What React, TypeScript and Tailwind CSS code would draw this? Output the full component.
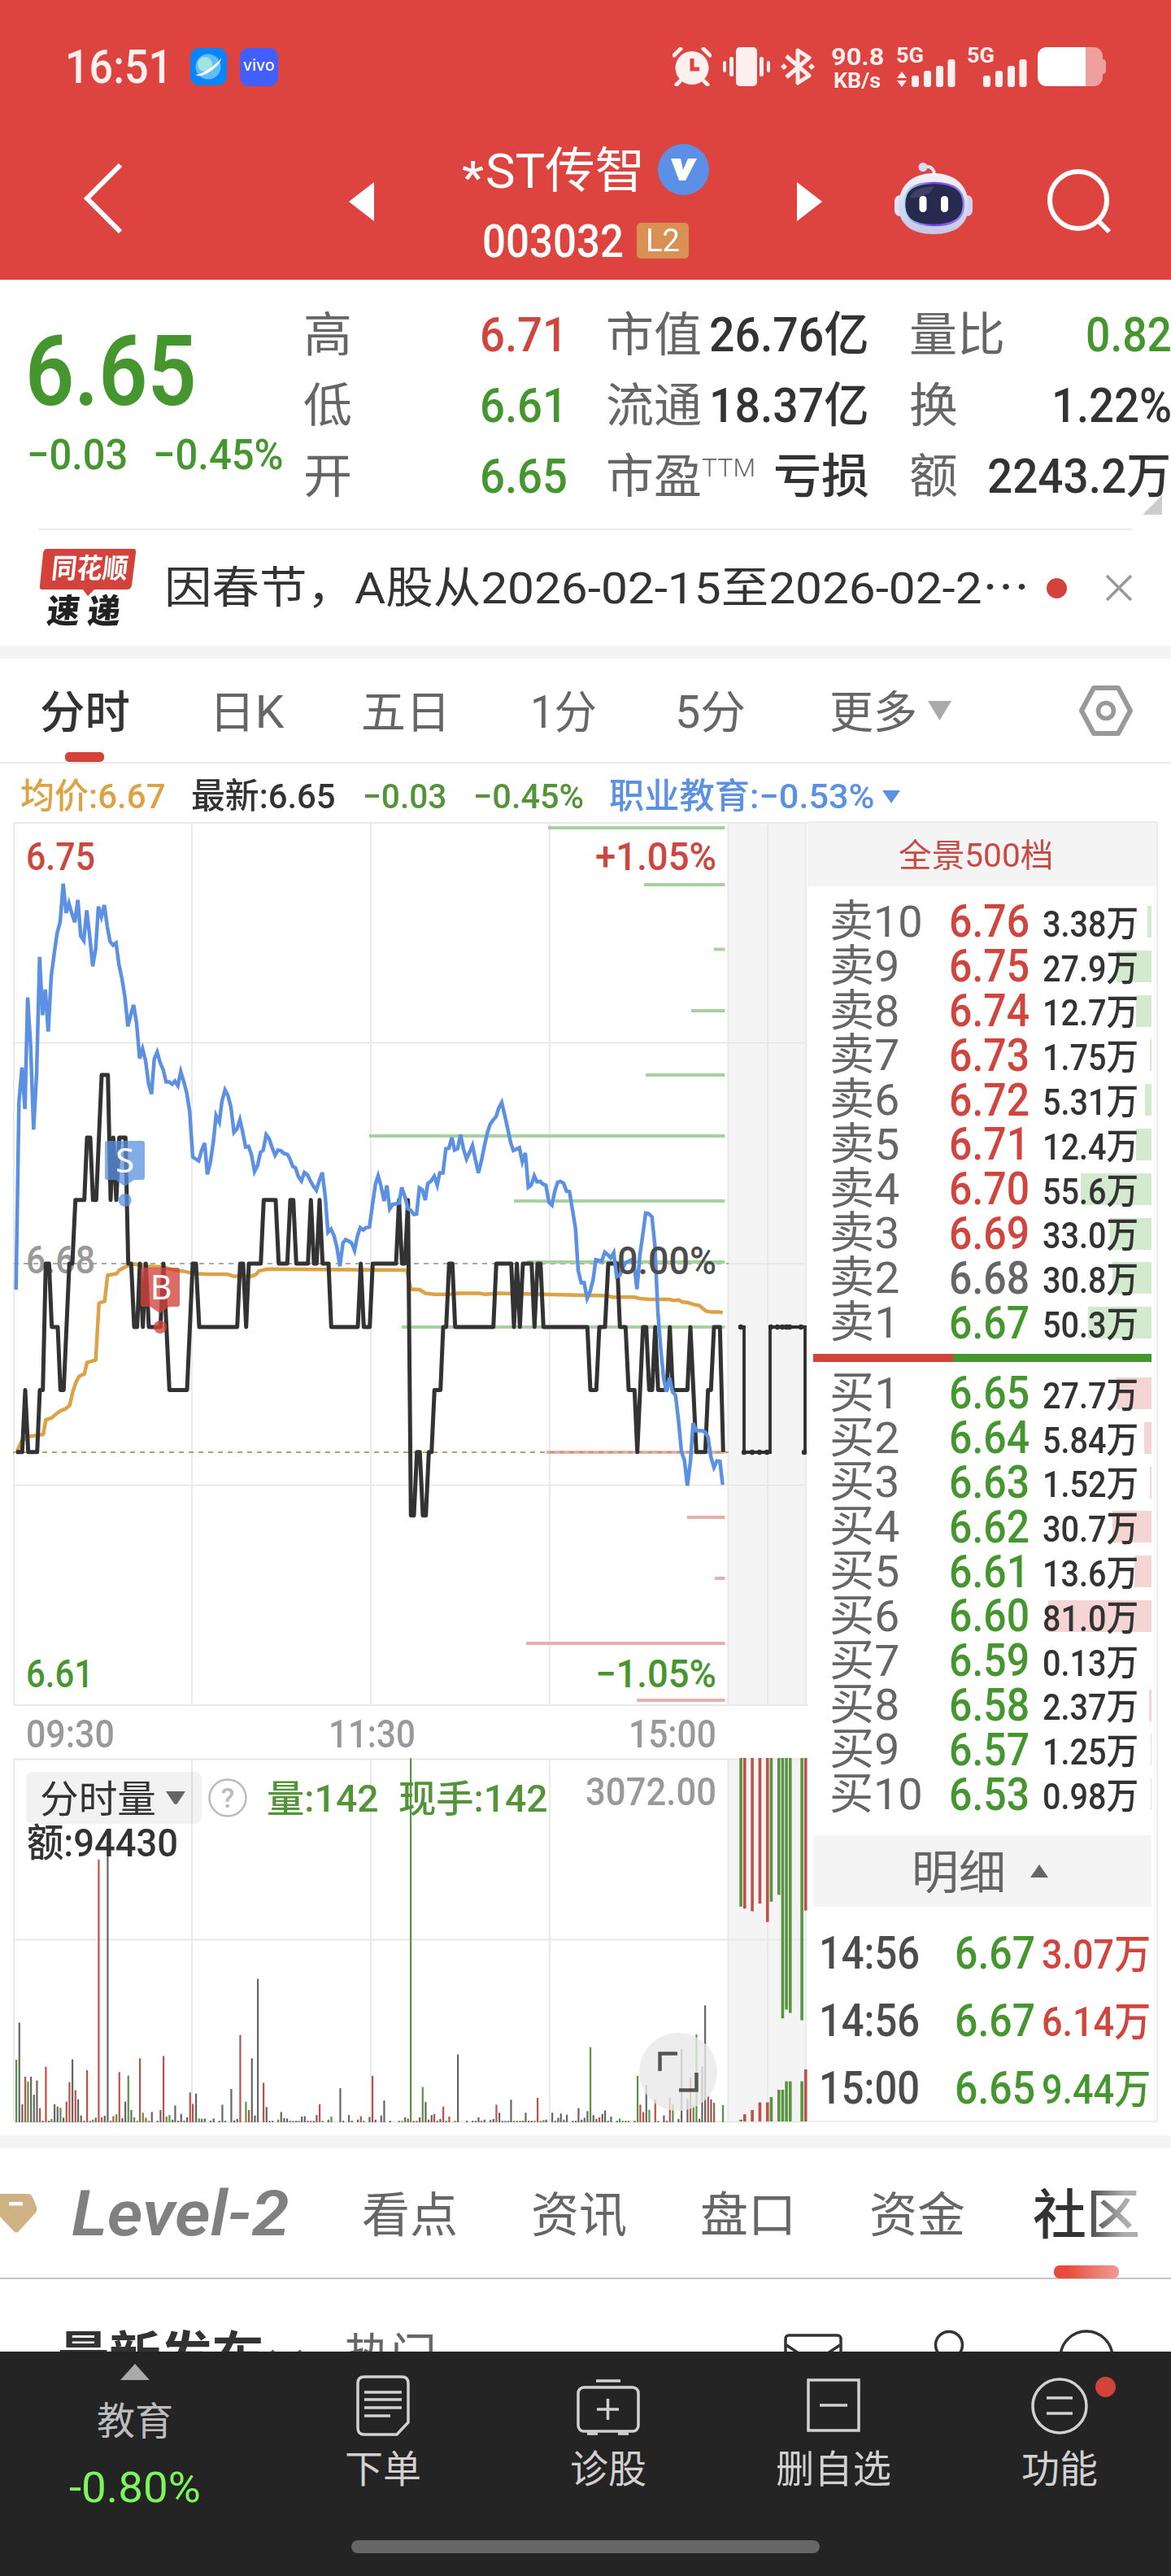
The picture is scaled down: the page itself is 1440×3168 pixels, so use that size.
import React, { useLayoutEffect, useRef } from "react";

/* Text squeezed or widened to exactly fill the width of its box. */
function Fit({ className = "", children }: { className?: string; children: React.ReactNode }) {
  const box = useRef<HTMLSpanElement>(null);
  const text = useRef<HTMLSpanElement>(null);
  useLayoutEffect(() => {
    const fit = () => {
      if (!box.current || !text.current) return;
      const natural = text.current.offsetWidth;
      if (natural) text.current.style.transform = `scaleX(${box.current.clientWidth / natural})`;
    };
    fit();
    document.fonts?.ready.then(fit);
  }, []);
  return (
    <span ref={box} className={`block shrink-0 whitespace-nowrap leading-none ${className}`}>
      <span ref={text} className="inline-block origin-left leading-none">
        {children}
      </span>
    </span>
  );
}

/* ---------- chart data: x in thirds of a pixel ---------- */
const priceLine =
  "60,1369 82,1369 93,1236 104,1369 137,1369 147,1236 158,1236 169,965 181,965 191,1101 213,1101 223,1236 235,1236 256,965 267,965 278,829 311,829 321,695 333,695 343,829 355,829 375,561 398,561 408,829 418,695 429,829 440,695 463,695 473,965 484,965 495,1101 506,1101 516,965 527,1101 538,965 549,1101 592,1101 603,965 625,1236 690,1236 711,965 723,965 735,1101 875,1101 886,965 897,965 908,1101 918,965 962,965 973,829 1017,829 1028,965 1060,965 1071,829 1082,829 1093,965 1136,965 1147,829 1158,965 1168,965 1179,829 1190,965 1212,965 1222,1101 1320,1101 1331,965 1342,1101 1364,1101 1375,965 1461,965 1472,829 1483,965 1494,965 1505,829 1516,1505 1527,1505 1538,1369 1549,1369 1560,1505 1571,1505 1582,1369 1592,1369 1603,1236 1625,1236 1635,1101 1646,1101 1657,965 1669,965 1679,1101 1820,1101 1831,965 1886,965 1896,1101 1907,965 1918,1101 1929,965 1961,965 1972,1101 1983,965 1994,965 2005,1101 2167,1101 2178,1236 2200,1236 2211,1101 2232,1101 2244,965 2277,965 2287,1101 2308,1101 2319,1236 2341,1236 2351,1369 2372,1101 2384,1101 2395,1236 2406,1236 2417,1101 2428,1236 2460,1236 2471,1101 2482,1236 2536,1236 2547,1101 2569,1369 2602,1369 2612,1236 2623,1236 2634,1101 2656,1101 2668,1369";
const sectorLine =
  "59,1021 70,620 81,545 92,634 102,395 113,500 124,678 135,560 146,308 157,433 167,378 178,468 189,350 200,300 211,257 222,233 233,151 244,214 254,193 265,215 276,234 287,186 298,263 309,273 320,208 331,263 342,328 353,290 363,200 374,222 385,197 396,244 406,275 417,283 428,278 439,325 450,355 461,395 472,457 483,431 493,411 504,450 515,526 526,505 537,530 548,580 559,602 569,527 580,512 591,535 602,550 613,576 624,576 635,581 645,574 656,584 667,554 678,575 689,600 700,640 711,737 733,745 744,722 755,707 765,774 776,748 787,705 797,648 809,662 819,617 830,593 841,605 852,630 863,684 874,677 885,657 895,682 906,715 917,714 928,732 939,768 950,755 961,727 971,722 982,689 993,698 1004,717 1015,733 1025,722 1036,723 1047,729 1060,731 1069,740 1080,757 1090,760 1101,779 1112,788 1123,770 1134,775 1145,788 1156,799 1167,808 1178,787 1189,770 1200,822 1210,898 1221,891 1232,905 1243,930 1254,971 1265,921 1275,914 1286,917 1297,921 1308,937 1319,905 1329,888 1340,893 1351,888 1363,887 1374,840 1385,795 1395,777 1406,800 1417,831 1427,798 1438,848 1449,838 1472,836 1482,802 1494,822 1505,848 1516,851 1527,860 1537,859 1547,803 1558,807 1569,829 1578,794 1591,788 1602,778 1613,797 1622,771 1634,771 1645,719 1656,718 1667,695 1677,722 1688,719 1699,689 1710,720 1721,741 1732,727 1743,712 1753,740 1765,771 1776,745 1787,713 1798,685 1808,667 1819,658 1830,650 1840,632 1851,620 1862,647 1873,676 1884,706 1894,723 1905,720 1916,717 1927,747 1938,728 1949,802 1960,797 1971,777 1981,790 1993,789 2003,795 2014,797 2025,834 2036,840 2047,810 2057,791 2068,789 2079,793 2090,810 2101,811 2112,850 2123,890 2133,980 2144,1006 2155,1006 2166,1040 2177,1025 2188,1000 2198,957 2220,960 2231,941 2242,946 2253,953 2264,942 2275,993 2287,990 2298,973 2308,964 2330,957 2340,970 2350,1020 2361,945 2372,900 2382,857 2393,858 2405,865 2416,925 2427,1070 2438,1150 2448,1210 2458,1240 2470,1210 2481,1240 2492,1247 2503,1300 2514,1368 2525,1387 2536,1441 2547,1390 2557,1307 2568,1323 2590,1323 2601,1326 2612,1337 2623,1380 2634,1402 2645,1388 2656,1389 2666,1439";
const averageLine =
  "62,1369 80,1345 105,1336 160,1331 169,1300 190,1296 210,1286 225,1280 240,1277 257,1269 268,1241 280,1220 290,1208 300,1204 311,1202 321,1177 353,1172 365,1050 386,1046 397,990 430,987 440,979 470,970 495,966 540,971 600,972 640,979 680,982 710,986 760,988 840,988 860,992 930,992 945,988 955,981 985,977 1500,979 1516,1020 1548,1021 1570,1029 1600,1031 1660,1031 1690,1029 1770,1029 1790,1031 1840,1029 2160,1033 2240,1034 2260,1037 2340,1037 2360,1040 2400,1042 2470,1042 2485,1044 2505,1043 2515,1047 2540,1049 2560,1053 2580,1055 2605,1067 2625,1069 2655,1069 2666,1071";

const PRICE_UNIT = 1568 / 900;
const VOLUME_UNIT = 1568 / 740;

const px = (points: string) =>
  points
    .split(" ")
    .map((p) => {
      const [x, y] = p.split(",").map(Number);
      return `${(x / 3).toFixed(1)},${(1000 + y / PRICE_UNIT).toFixed(1)}`;
    })
    .join(" ");

const askDepth = [
  [674, 1018],
  [792, 1088],
  [878, 1167.5],
  [850, 1243],
  [794, 1322],
  [454, 1397],
  [632, 1477],
  [648, 1552],
  [494, 1632],
];
const bidDepth = [
  [672, 1786],
  [845, 1866],
  [879, 1941],
  [647, 2021],
  [783, 2091],
];

const volume =
  "60,1384,g 71,1287,k 82,1500,k 93,1428,r 103,1441,g 114,1428,k 125,1475,k 136,1438,k 147,1510,r 158,1543,k 169,1402,r 180,1543,k 190,1538,g 201,1500,k 212,1506,k 223,1509,g 234,1535,k 245,1493,r 256,1442,r 267,1383,k 278,1463,r 288,1487,k 299,1529,k 310,1543,k 321,1411,r 332,1543,r 342,1540,g 353,1535,k 364,862,r 375,1534,r 386,1530,k 397,810,k 408,1543,g 418,1531,r 429,1526,g 440,1416,r 451,1536,k 462,1493,k 473,1425,g 484,1515,k 495,1534,g 506,1543,g 516,1380,r 527,1522,g 538,1535,r 549,1543,g 560,1520,k 581,1543,k 592,1515,k 603,1374,r 614,1532,g 625,1528,g 636,1540,k 646,1503,k 657,1543,k 668,1525,k 679,1543,k 690,1534,k 701,1469,r 711,1499,r 723,1472,k 734,1537,g 744,1538,k 755,1537,k 777,1543,k 788,1537,k 809,1543,k 820,1501,k 831,1543,k 853,1460,k 864,1542,k 875,1538,k 886,1319,r 907,1493,g 918,1515,r 929,1380,k 940,1529,k 951,1173,k 972,1444,r 983,1507,k 994,1543,k 1005,1543,k 1026,1540,g 1037,1520,k 1048,1536,k 1059,1537,k 1070,1543,r 1081,1543,r 1092,1543,k 1102,1543,g 1113,1532,k 1124,1531,k 1135,1543,k 1146,1543,r 1157,1543,k 1168,1528,k 1179,1500,r 1190,1543,g 1211,1540,k 1222,1532,g 1255,1458,k 1266,1543,k 1287,1528,k 1298,1543,k 1320,1540,k 1331,1531,r 1342,1543,g 1363,1533,k 1374,1426,r 1385,1540,k 1406,1529,k 1417,1490,k 1439,1543,k 1472,1543,r 1483,1543,g 1494,1534,k 1505,1537,r 1515,598,g 1526,1543,r 1537,1543,r 1548,1534,k 1559,1455,g 1570,1494,k 1581,1540,r 1592,1528,k 1602,1525,r 1613,1543,k 1624,1538,k 1635,1506,r 1646,1543,k 1657,1532,r 1678,1543,g 1689,1370,k 1722,1543,k 1743,1543,k 1754,1543,k 1765,1534,k 1776,1543,k 1787,1540,k 1809,1541,k 1820,1538,k 1831,1501,r 1842,1522,k 1853,1543,k 1864,1543,k 1875,1543,k 1885,1488,k 1896,1543,g 1907,1543,g 1918,1543,r 1929,1543,k 1939,1522,k 1950,1543,k 1961,1543,k 1972,1543,r 1983,1483,r 1994,1543,g 2005,1541,g 2015,1540,k 2037,1522,k 2048,1543,k 2059,1535,k 2069,1524,k 2080,1540,k 2091,1527,k 2113,1543,k 2124,1543,k 2134,1510,k 2145,1540,k 2156,1535,k 2167,1518,k 2178,1351,g 2189,1528,k 2200,1538,k 2211,1534,r 2222,1525,k 2232,1516,k 2243,1543,k 2254,1532,k 2276,1543,k 2286,1537,g 2297,1543,g 2308,1543,k 2319,1543,g 2341,1543,k 2352,1426,g 2362,1501,r 2373,1520,r 2384,1449,k 2395,1514,g 2417,1487,r 2428,1543,g 2449,1529,k 2460,1543,k 2471,1483,r 2482,1500,g 2503,1538,k 2514,1356,k 2536,1487,k 2547,1430,r 2558,1503,g 2569,1318,g 2580,1538,k 2590,1401,k 2601,1242,k 2612,1478,r 2623,1487,k 2634,1496,r 2667,1502,g";

/* x, lower end of the hanging bar, upper end of the standing bar, colour */
const closing: [number, number, number, "g" | "r"][] = [
  [2733, 985, 1540, "g"],
  [2747, 990, 1526, "r"],
  [2775, 997, 1515, "r"],
  [2803, 977, 1495, "r"],
  [2831, 1025, 1495, "r"],
  [2845, 972, 1481, "g"],
  [2873, 954, 1462, "g"],
  [2887, 1276, 1462, "g"],
  [2901, 1253, 1440, "g"],
  [2915, 1262, 1440, "g"],
  [2958, 1281, 1440, "g"],
  [2972, 995, 1409, "r"],
];
const barColor: Record<string, string> = { g: "#5a9443", r: "#be5149", k: "#666666" };
const vy = (y: number) => 1880 + y / VOLUME_UNIT;

type Level = { label: string; price: string; qty: string; bar: number };
const asks: Level[] = [
  { label: "卖10", price: "6.76", qty: "3.38万", bar: 5 },
  { label: "卖9", price: "6.75", qty: "27.9万", bar: 43 },
  { label: "卖8", price: "6.74", qty: "12.7万", bar: 19 },
  { label: "卖7", price: "6.73", qty: "1.75万", bar: 2 },
  { label: "卖6", price: "6.72", qty: "5.31万", bar: 8 },
  { label: "卖5", price: "6.71", qty: "12.4万", bar: 19 },
  { label: "卖4", price: "6.70", qty: "55.6万", bar: 87 },
  { label: "卖3", price: "6.69", qty: "33.0万", bar: 51 },
  { label: "卖2", price: "6.68", qty: "30.8万", bar: 48 },
  { label: "卖1", price: "6.67", qty: "50.3万", bar: 78 },
];
const bids: Level[] = [
  { label: "买1", price: "6.65", qty: "27.7万", bar: 43 },
  { label: "买2", price: "6.64", qty: "5.84万", bar: 9 },
  { label: "买3", price: "6.63", qty: "1.52万", bar: 2 },
  { label: "买4", price: "6.62", qty: "30.7万", bar: 48 },
  { label: "买5", price: "6.61", qty: "13.6万", bar: 21 },
  { label: "买6", price: "6.60", qty: "81.0万", bar: 127 },
  { label: "买7", price: "6.59", qty: "0.13万", bar: 0 },
  { label: "买8", price: "6.58", qty: "2.37万", bar: 3 },
  { label: "买9", price: "6.57", qty: "1.25万", bar: 1 },
  { label: "买10", price: "6.53", qty: "0.98万", bar: 1 },
];
const trades = [
  { time: "14:56", price: "6.67", qty: "3.07万", up: true },
  { time: "14:56", price: "6.67", qty: "6.14万", up: true },
  { time: "15:00", price: "6.65", qty: "9.44万", up: false },
];

function priceColor(p: string) {
  const n = Number(p);
  return n > 6.68 ? "text-[#d0463e]" : n < 6.68 ? "text-[#45962f]" : "text-[#666]";
}

/* ---------- header ---------- */
function StatusBar() {
  return (
    <div className="flex h-[164px] items-center text-[#fff0ef]">
      <Fit className="ml-[80px] w-[132px] text-[58px] font-medium">16:51</Fit>
      <svg className="ml-[22px] shrink-0" width="45" height="48" viewBox="0 0 45 48">
        <rect y="1" width="45" height="46" rx="11" fill="#0a84fb" />
        <circle cx="22" cy="24" r="15.500" fill="#62bdf5" />
        <circle cx="18" cy="21" r="9" fill="#b4ecd8" opacity=".8" />
        <path d="M6 33C10 38 40 16 38 12C40 22 12 42 6 33Z" fill="#fff" />
      </svg>
      <span className="ml-[16px] flex h-[47px] w-[47px] shrink-0 items-center justify-center rounded-[11px] bg-[#415fff] text-white">
        <Fit className="w-[39px] pb-1 font-['Inter'] text-[19px] font-medium">vivo</Fit>
      </span>
      <svg className="ml-[485px] shrink-0" width="48" height="48" viewBox="0 0 48 48">
        <circle cx="24" cy="25.500" r="20.500" fill="currentColor" />
        <path d="M9 42L5 46M39 42L43 46M2 10L10 2M46 10L38 2" stroke="currentColor" strokeWidth="5" strokeLinecap="round" />
        <path d="M24 14V27H33" stroke="#dd4440" strokeWidth="5" fill="none" />
      </svg>
      <svg className="ml-[14px] shrink-0" width="58" height="48" viewBox="0 0 58 48" fill="currentColor">
        <rect x="16" width="26" height="48" rx="5" />
        <rect x="8" y="12" width="5" height="24" rx="2" />
        <rect x="45" y="12" width="5" height="24" rx="2" />
        <rect y="17" width="4" height="14" rx="2" />
        <rect x="54" y="17" width="4" height="14" rx="2" />
      </svg>
      <svg className="ml-[13px] shrink-0" width="42" height="48" viewBox="0 0 42 48">
        <path d="M7 11L35 35L21 44V4L35 13L7 37" fill="none" stroke="currentColor" strokeWidth="5" strokeLinejoin="round" />
        <path d="M4 20l4 4-4 4-4-4zM38 20l4 4-4 4-4-4z" fill="currentColor" />
      </svg>
      <div className="ml-[19px] flex w-[66px] shrink-0 flex-col items-center gap-[1px] pt-[3px]">
        <Fit className="w-[65px] text-[29px] font-bold">90.8</Fit>
        <Fit className="w-[58px] text-[26px] font-bold">KB/s</Fit>
      </div>
      <svg className="ml-[14px] shrink-0 overflow-visible" width="164" height="50" viewBox="0 0 164 50" fill="currentColor">
        <text x="1" y="20" fontSize="25" fontWeight="700" fontFamily="Roboto" textLength="34" lengthAdjust="spacingAndGlyphs">5G</text>
        <text x="88" y="20" fontSize="25" fontWeight="700" fontFamily="Roboto" textLength="34" lengthAdjust="spacingAndGlyphs">5G</text>
        <path d="M8 31l6 8H2zM8 50l6-8H2z" />
        {[0, 88].map((dx) => (
          <g key={dx}>
            <rect x={20 + dx} y="36" width="9" height="14" rx="3" />
            <rect x={35 + dx} y="30" width="9" height="20" rx="3" />
            <rect x={50 + dx} y="24" width="9" height="26" rx="3" />
            <rect x={64.5 + dx} y="16" width="9" height="34" rx="3" />
          </g>
        ))}
      </svg>
      <svg className="ml-[11px] shrink-0" width="84" height="48" viewBox="0 0 84 48">
        <path d="M59 0h10a11 11 0 0 1 11 11v4a4 4 0 0 1 4 4v10a4 4 0 0 1-4 4v4a11 11 0 0 1-11 11H59z" fill="#eea09e" />
        <path d="M59 0H11A11 11 0 0 0 0 11v26a11 11 0 0 0 11 11h48z" fill="#fff" />
      </svg>
    </div>
  );
}

function TitleBar() {
  return (
    <div className="flex h-[180px] items-start text-white">
      <svg className="ml-[101px] mt-[37px] shrink-0" width="50" height="86" viewBox="0 0 50 86">
        <path d="M47 2L6 43L47 84" fill="none" stroke="#fff" strokeWidth="6" />
      </svg>
      <svg className="ml-[278px] mt-[60px] shrink-0" width="31" height="48">
        <path d="M31 0V48L0 24Z" fill="#fff" />
      </svg>
      <div className="ml-[105px] flex w-[314px] shrink-0 flex-col">
        <div className="mt-[10px] flex h-[68px] items-center">
          <Fit className="ml-[3px] w-[27px] pt-[21px] text-[56px] font-medium">*</Fit>
          <Fit className="ml-[2px] w-[196px] pt-[5px] text-[60px]">ST传智</Fit>
          <span className="ml-[16px] flex size-[63px] items-center justify-center rounded-full bg-[#5b90e6]">
            <svg width="32" height="27" viewBox="0 0 32 27">
              <path d="M0 0H12L15 14L21 0H32L18 27H10Z" fill="#fff" />
            </svg>
          </span>
        </div>
        <div className="mt-[20px] flex h-[68px] items-center">
          <Fit className="ml-[28px] w-[174px] pt-[2px] text-[56px] font-medium">003032</Fit>
          <span className="ml-[16px] flex h-[44px] w-[64px] items-center justify-center rounded-[5px] bg-[#d89153]">
            <Fit className="w-[42px] text-[39px]">L2</Fit>
          </span>
        </div>
      </div>
      <svg className="ml-[101px] mt-[60px] shrink-0" width="31" height="48">
        <path d="M0 0V48L31 24Z" fill="#fff" />
      </svg>
      <svg className="ml-[88px] mt-[35px] shrink-0" width="98" height="90" viewBox="0 0 98 90">
        <defs>
          <linearGradient id="shell" x1="0" y1="0" x2="0" y2="1">
            <stop offset="0" stopColor="#f4f2fb" />
            <stop offset="1" stopColor="#c3c6e6" />
          </linearGradient>
          <linearGradient id="rim" x1="0" y1="0" x2="1" y2="0">
            <stop offset="0" stopColor="#a9e6ee" />
            <stop offset="0.5" stopColor="#7a3fe0" />
            <stop offset="1" stopColor="#8f86ea" />
          </linearGradient>
        </defs>
        <path d="M36 7C46 4 50 9 50 17" fill="none" stroke="#e8e2f4" strokeWidth="4" />
        <circle cx="36" cy="6.500" r="5.500" fill="#d9dbf2" />
        <rect x="1" y="41" width="16" height="26" rx="7" fill="#e4e2f4" />
        <rect x="81" y="41" width="16" height="26" rx="7" fill="#d3d0ee" />
        <path d="M49 14C76 14 92 30 92 54C92 77 76 89 49 89C22 89 6 77 6 54C6 30 22 14 49 14Z" fill="url(#shell)" />
        <path d="M49 26C74 26 86 34 86 52C86 69 76 78 49 78C22 78 13 69 13 52C13 34 24 26 49 26Z" fill="#27294f" stroke="url(#rim)" strokeWidth="2.500" />
        <path d="M20 44C23 34 34 31 50 30C46 40 30 46 20 44Z" fill="#46486a" opacity=".8" />
        <rect x="31.500" y="42" width="9" height="20" rx="4.500" fill="#fff" />
        <rect x="58" y="42" width="9" height="20" rx="4.500" fill="#fff" />
      </svg>
      <svg className="ml-[90px] mt-[43px] shrink-0" width="82" height="84" viewBox="0 0 82 84">
        <circle cx="39" cy="39" r="35" fill="none" stroke="#fff" strokeWidth="6" />
        <path d="M63 64L77 78" stroke="#fff" strokeWidth="6" />
      </svg>
    </div>
  );
}

/* ---------- quote ---------- */
function Quote() {
  return (
    <div className="h-[306px] border-b-2 border-transparent">
      <div className="flex h-[304px] overflow-hidden">
        <div className="w-[372px] shrink-0">
          <Fit className="ml-[31px] mt-[53px] w-[211px] text-[120px] font-semibold text-[#45962f]">6.65</Fit>
          <div className="mt-[17px] flex text-[#45962f]">
            <Fit className="ml-[33px] w-[124px] text-[52px] font-medium">−0.03</Fit>
            <Fit className="ml-[31px] w-[161px] text-[52px] font-medium">−0.45%</Fit>
          </div>
        </div>
        <div className="w-[334px] shrink-0 pt-[24px] text-[58px] text-[#666]">
          {[
            ["高", "6.71", "text-[#cf463e]"],
            ["低", "6.61", "text-[#45962f]"],
            ["开", "6.65", "text-[#45962f]"],
          ].map(([k, v, c]) => (
            <div key={k} className="flex h-[87px] items-center">
              <Fit className="ml-[1px] w-[60px]">{k}</Fit>
              <Fit className={`ml-[157px] w-[108px] text-[60px] font-medium ${c}`}>{v}</Fit>
            </div>
          ))}
        </div>
        <div className="ml-[39px] w-[325px] shrink-0 pt-[24px] text-[58px] text-[#666]">
          <div className="flex h-[87px] items-center">
            <Fit className="w-[118px]">市值</Fit>
            <Fit className="ml-[9px] w-[197px] text-[59px] font-medium text-[#333]">26.76亿</Fit>
          </div>
          <div className="flex h-[87px] items-center">
            <Fit className="w-[118px]">流通</Fit>
            <Fit className="ml-[9px] w-[197px] text-[59px] font-medium text-[#333]">18.37亿</Fit>
          </div>
          <div className="flex h-[87px] items-center">
            <Fit className="w-[118px]">市盈</Fit>
            <Fit className="mb-[20px] w-[66px] text-[31px] font-light">TTM</Fit>
            <Fit className="ml-[22px] w-[118px] font-medium text-[#333]">亏损</Fit>
          </div>
        </div>
        <div className="relative ml-[48px] w-[322px] shrink-0 pt-[24px] text-[58px] text-[#666]">
          <div className="flex h-[87px] items-center">
            <Fit className="w-[118px]">量比</Fit>
            <Fit className="ml-[99px] w-[106px] text-[60px] font-medium text-[#45962f]">0.82</Fit>
          </div>
          <div className="flex h-[87px] items-center">
            <Fit className="w-[60px]">换</Fit>
            <Fit className="ml-[115px] w-[148px] text-[60px] font-medium text-[#333]">1.22%</Fit>
          </div>
          <div className="flex h-[87px] items-center">
            <Fit className="w-[60px]">额</Fit>
            <Fit className="ml-[36px] w-[226px] text-[59px] font-medium text-[#333]">2243.2万</Fit>
          </div>
          <svg className="absolute left-[287px] top-[265px]" width="24" height="24">
            <path d="M24 0V24H0Z" fill="#ccc" />
          </svg>
        </div>
      </div>
    </div>
  );
}

function News() {
  return (
    <div className="mx-[48px] flex h-[144px] items-center border-t-2 border-[#ececec]">
      <div className="relative h-[100px] w-[120px] shrink-0">
        <svg className="absolute inset-0" width="120" height="60">
          <path d="M10 2H116Q120 2 119 7L114 47Q113 52 108 52H68L60 60L54 52H4Q0 52 1 47L5 7Q6 2 10 2Z" fill="#d3433b" />
        </svg>
        <div className="relative flex -skew-x-6 flex-col items-center">
          <Fit className="mt-[9px] w-[94px] text-[34px] font-bold text-white">同花顺</Fit>
          <Fit className="ml-[-4px] mt-[16px] w-[90px] text-[41px] font-black text-[#222]">速 递</Fit>
        </div>
      </div>
      <Fit className="ml-[34px] w-[1064px] pt-[2px] text-[54px] text-[#333]">因春节，A股从2026-02-15至2026-02-2⋯</Fit>
      <span className="ml-[21px] size-[25px] shrink-0 rounded-full bg-[#d3433b]" />
      <svg className="ml-[48px] shrink-0" width="32" height="32" viewBox="0 0 32 32">
        <path d="M1 1L31 31M31 1L1 31" stroke="#999" strokeWidth="3.500" />
      </svg>
    </div>
  );
}

function PeriodTabs() {
  return (
    <div className="relative flex h-[129px] items-center border-b-2 border-[#e8e8e8] text-[55px] text-[#666]">
      <Fit className="ml-[49px] w-[111px] pt-[5px] font-medium text-[#333]">分时</Fit>
      <Fit className="ml-[97px] w-[93px] pt-[5px]">日K</Fit>
      <Fit className="ml-[94px] w-[110px] pt-[5px]">五日</Fit>
      <Fit className="ml-[98px] w-[82px] pt-[5px]">1分</Fit>
      <Fit className="ml-[96px] w-[87px] pt-[5px]">5分</Fit>
      <Fit className="ml-[103px] w-[108px] pt-[5px]">更多</Fit>
      <svg className="ml-[13px] shrink-0" width="29" height="24">
        <path d="M0 0H29L14.500 24Z" fill="#aaa" />
      </svg>
      <svg className="ml-[157px] shrink-0" width="66" height="62" viewBox="0 0 66 62">
        <path d="M18 3H48L63 31L48 59H18L3 31Z" fill="none" stroke="#999" strokeWidth="6" strokeLinejoin="round" />
        <circle cx="33" cy="31" r="9.500" fill="none" stroke="#999" strokeWidth="5.500" />
      </svg>
      <span className="absolute bottom-0 left-[80px] h-[12px] w-[48px] rounded-[5px] bg-[#d4433b]" />
    </div>
  );
}

function Legend() {
  return (
    <div className="flex h-[71px] items-center pt-[10px] text-[43px] font-medium">
      <Fit className="ml-[25px] w-[179px] text-[#dba345]">均价:6.67</Fit>
      <Fit className="ml-[31px] w-[178px] text-[#333]">最新:6.65</Fit>
      <Fit className="ml-[33px] w-[103px] text-[#539439]">−0.03</Fit>
      <Fit className="ml-[33px] w-[136px] text-[#539439]">−0.45%</Fit>
      <Fit className="ml-[31px] w-[326px] text-[#5b90e2]">职业教育:−0.53%</Fit>
      <svg className="ml-[9px] shrink-0" width="24" height="16">
        <path d="M1 0H23L12 16Z" fill="#5b90e2" />
      </svg>
    </div>
  );
}

/* ---------- charts ---------- */
const chartText = { fontFamily: "Roboto", fontSize: 48, fontWeight: 500, lengthAdjust: "spacingAndGlyphs" as const };

function PriceChart() {
  return (
    <svg className="block" width="977" height="1088" viewBox="16 1010 977 1088" fill="none">
      <rect x="894" y="1011" width="98" height="1086" fill="#f4f4f4" />
      <path d="M17 1282.500H992M895 1554H992M17 1826.500H992" stroke="#e4e4e4" strokeWidth="1.500" />
      <path d="M17 1011V2098M236 1011V2098M456 1011V2098M676 1011V2098M895.500 1011V2098M944 1011V2098M991 1011V2098M16 1012H993M16 2097H993" stroke="#e9e9e9" strokeWidth="2" />
      <path d="M17 1554H896" stroke="#aaa" strokeWidth="2" strokeDasharray="6 6" />
      {askDepth.map(([x, y]) => (
        <path key={y} d={`M${x} ${y}H891.500`} stroke="#a6d2a0" strokeWidth="4" />
      ))}
      {bidDepth.map(([x, y]) => (
        <path key={y} d={`M${x} ${y}H891.500`} stroke="#e4b0ad" strokeWidth="4" />
      ))}
      <path d="M16 1786H896" stroke="#b7a06a" strokeWidth="1.800" strokeDasharray="6 6" />
      <text x="32" y="1070" fill="#cb4840" textLength="85" {...chartText}>6.75</text>
      <text x="32" y="1566" fill="#999" textLength="85" {...chartText}>6.68</text>
      <text x="32" y="2075" fill="#48952f" textLength="83" {...chartText}>6.61</text>
      <polyline points={px(averageLine)} stroke="#dba345" strokeWidth="4.500" strokeLinejoin="round" />
      <polyline points={px(priceLine)} stroke="#333" strokeWidth="5" strokeLinejoin="round" />
      <polyline points={px(sectorLine)} stroke="#5b90e2" strokeWidth="4.500" />
      <text x="732" y="1070" fill="#cb4840" textLength="149" {...chartText}>+1.05%</text>
      <text x="759" y="1567" fill="#4c4c4c" textLength="122" {...chartText}>0.00%</text>
      <text x="732" y="2075" fill="#48952f" textLength="149" {...chartText}>−1.05%</text>
      <path d="M908 1632H915V1786H947V1632H990V1786" stroke="#2f2f2f" strokeWidth="3.800" />
      {[911, 948, 956, 962, 967, 971, 985].map((x) => (
        <circle key={x} cx={x} cy="1632" r="3.200" fill="#2f2f2f" />
      ))}
      {[915, 925, 934, 943, 989].map((x) => (
        <circle key={x} cx={x} cy="1786" r="3.200" fill="#2f2f2f" />
      ))}
      <g fill="#5b90e2" fillOpacity=".75">
        <path d="M132 1403H175Q178 1403 178 1406V1448Q178 1451 175 1451H165L153.500 1459L142 1451H132Q129 1451 129 1448V1406Q129 1403 132 1403Z" />
        <circle cx="153.700" cy="1476" r="8" />
      </g>
      <g fill="#d4433b" fillOpacity=".78">
        <path d="M176 1559H218Q221 1559 221 1562V1604Q221 1607 218 1607H208L196.500 1615L185 1607H176Q173 1607 173 1604V1562Q173 1559 176 1559Z" />
        <circle cx="197" cy="1632" r="8" />
      </g>
      <text x="153.500" y="1442" fill="#fff" textAnchor="middle" fontFamily="Noto Sans" fontSize="42">S</text>
      <text x="198" y="1598" fill="#fff" textAnchor="middle" fontFamily="Noto Sans" fontSize="41">B</text>
    </svg>
  );
}

function VolumeChart() {
  return (
    <div className="relative h-[449px] w-[977px]">
      <svg className="block" width="977" height="449" viewBox="16 2162 977 449" fill="none">
        <rect x="894" y="2163" width="98" height="446" fill="#f4f4f4" />
        <path d="M16 2163.500H993M16 2385.500H992M17 2609.500H992" stroke="#e8e8e8" strokeWidth="2" />
        <path d="M17 2163V2609M236 2163V2609M456 2163V2609M676 2163V2609M895.500 2163V2609M944 2163V2609M991 2163V2609" stroke="#e9e9e9" strokeWidth="2" />
        {volume.split(" ").map((b) => {
          const [x, y, c] = b.split(",");
          const top = vy(Number(y));
          return <rect key={x} x={Number(x) / 3 - 1} y={top} width="2.200" height={2610 - top} fill={barColor[c]} />;
        })}
        {closing.map(([x, low, high, c]) => (
          <g key={x} fill={barColor[c]}>
            <rect x={x / 3 - 1.7} y="2162" width="3.600" height={vy(low) - 2162} />
            <rect x={x / 3 - 1.7} y={vy(high)} width="3.600" height={2609 - vy(high)} />
          </g>
        ))}
      </svg>
      <div className="absolute inset-x-0 top-0 text-[48px] font-medium">
        <div className="flex h-[96px] items-center pt-[2px]">
          <div className="ml-[16px] flex h-[64px] w-[216px] shrink-0 items-center rounded-[8px] bg-black/5">
            <Fit className="ml-[17px] w-[143px] pt-[3px] text-[47px] font-normal text-[#333]">分时量</Fit>
            <svg className="ml-[12px]" width="24" height="17">
              <path d="M0 0H24L14 15Q12 17 10 15Z" fill="#666" />
            </svg>
          </div>
          <svg className="ml-[8px] shrink-0" width="48" height="48" viewBox="0 0 48 48">
            <circle cx="24" cy="24" r="22.500" fill="none" stroke="#bbb" strokeWidth="2.500" />
            <text x="24" y="36" textAnchor="middle" fontFamily="Roboto" fontSize="34" fill="#bbb">?</text>
          </svg>
          <Fit className="ml-[24px] w-[138px] pt-px text-[46px] text-[#539439]">量:142</Fit>
          <Fit className="ml-[24px] w-[184px] pt-px text-[46px] text-[#539439]">现手:142</Fit>
          <Fit className="mb-[14px] ml-[46px] w-[161px] text-[#999]">3072.00</Fit>
        </div>
        <Fit className="ml-[17px] mt-[-15px] w-[186px] text-[#333]">额:94430</Fit>
      </div>
      <span className="absolute left-[770px] top-[338px] flex size-[96px] items-center justify-center rounded-full bg-[#e8e8e8]/80">
        <svg width="50" height="50" viewBox="0 0 50 50">
          <path d="M2.500 24V2.500H24M26 47.500H47.500V26" fill="none" stroke="#555" strokeWidth="4.500" />
        </svg>
      </span>
    </div>
  );
}

function ChartColumn() {
  return (
    <div className="ml-[16px] w-[977px] shrink-0">
      <PriceChart />
      <div className="flex h-[64px] items-center pt-[5px] text-[48px] font-medium text-[#999]">
        <Fit className="ml-[16px] w-[109px]">09:30</Fit>
        <Fit className="ml-[263px] w-[107px]">11:30</Fit>
        <Fit className="ml-[262px] w-[108px]">15:00</Fit>
      </div>
      <VolumeChart />
    </div>
  );
}

/* ---------- order book ---------- */
function Book({ levels, tint }: { levels: Level[]; tint: string }) {
  return (
    <div>
      {levels.map((l) => (
        <div key={l.label} className="relative flex h-[54.800px] items-center pl-[27px]">
          <span className={`absolute right-[6px] top-[8px] h-[39px] ${tint}`} style={{ width: l.bar }} />
          <Fit className={`relative pt-px text-[54px] text-[#666] ${l.label.length > 2 ? "w-[115px]" : "mr-[29px] w-[86px]"}`}>{l.label}</Fit>
          <Fit className={`relative ml-[32px] w-[99px] text-[56px] font-medium ${priceColor(l.price)}`}>{l.price}</Fit>
          <Fit className="relative ml-[16px] w-[118px] pt-[6px] text-[45px] font-medium text-[#333]">{l.qty}</Fit>
        </div>
      ))}
    </div>
  );
}

function OrderBook() {
  return (
    <div className="h-[1600px] w-[431px] shrink-0 border-b-2 border-r-2 border-t-2 border-[#ededed]">
      <div className="flex h-[78px] items-center justify-center bg-[#f4f4f4] pr-[16px] pt-[3px]">
        <Fit className="w-[190px] text-[40px] text-[#c94a42]">全景500档</Fit>
      </div>
      <div className="h-[16px]" />
      <Book levels={asks} tint="bg-[#d3eacf]" />
      <div className="ml-[7px] mt-[11px] flex h-[10px] w-[416px]">
        <span className="w-[172px] bg-[#d4433b]" />
        <span className="grow bg-[#45962f]" />
      </div>
      <div className="h-[11px]" />
      <Book levels={bids} tint="bg-[#f4d5d4]" />
      <div className="ml-[7px] mt-[23px] flex h-[88px] w-[416px] items-center bg-[#f4f4f4]">
        <Fit className="ml-[121px] w-[116px] pt-[6px] text-[57px] text-[#666]">明细</Fit>
        <svg className="ml-[30px]" width="22" height="16">
          <path d="M11 0L22 16H0Z" fill="#666" />
        </svg>
      </div>
      <div className="pt-[16px]">
        {trades.map((t, i) => (
          <div key={i} className="flex h-[83px] items-center">
            <Fit className="ml-[14px] w-[124px] text-[56px] font-medium text-[#4c4c4c]">{t.time}</Fit>
            <Fit className="ml-[43px] w-[99px] text-[56px] font-medium text-[#45962f]">{t.price}</Fit>
            <Fit className={`ml-[8px] w-[134px] pt-[4px] text-[50px] font-medium ${t.up ? "text-[#d0463e]" : "text-[#45962f]"}`}>{t.qty}</Fit>
          </div>
        ))}
      </div>
    </div>
  );
}

/* ---------- lower part ---------- */
function SectionTabs() {
  return (
    <div className="relative flex h-[161px] items-center border-b-2 border-[#c4c4c4] text-[59px] text-[#666]">
      <svg className="mt-px shrink-0" width="46" height="48" viewBox="0 0 46 48">
        <path d="M0 0H34Q38 0 40 4L45 16Q46 20 44 23L23 46Q20 49 17 46L0 28Z" fill="#cfb283" />
        <rect x="11" y="10" width="17" height="4.500" rx="1" fill="#fff" />
      </svg>
      <Fit className="ml-[42px] w-[268px] pt-[3px] text-[78px] font-semibold italic text-[#808080]">Level-2</Fit>
      <Fit className="ml-[89px] w-[118px] pt-[6px]">看点</Fit>
      <Fit className="ml-[90px] w-[118px] pt-[6px]">资讯</Fit>
      <Fit className="ml-[90px] w-[118px] pt-[6px]">盘口</Fit>
      <Fit className="ml-[90px] w-[118px] pt-[6px]">资金</Fit>
      <Fit className="ml-[83px] w-[132px] pt-[6px] text-[66px] font-medium text-[#333] [mask-image:linear-gradient(90deg,#000_45%,#0006_85%)]">社区</Fit>
      <span className="absolute bottom-[-1px] left-[1296px] h-[16px] w-[80px] rounded-[7px] bg-gradient-to-r from-[#e74b3b] from-20% to-[#f09a94]" />
    </div>
  );
}

function Community() {
  return (
    <div className="flex h-[89px] items-start overflow-hidden">
      <Fit className="ml-[71px] mt-[63px] w-[253px] text-[63px] font-bold text-[#333]">最新发布</Fit>
      <svg className="ml-[8px] mt-[86px] shrink-0" width="40" height="20">
        <path d="M2 2L20 20L38 2" fill="none" stroke="#555" strokeWidth="4" />
      </svg>
      <Fit className="ml-[51px] mt-[66px] w-[114px] text-[58px] text-[#666]">热门</Fit>
      <svg className="ml-[427px] mt-[67px] shrink-0" width="72" height="56" viewBox="0 0 72 56">
        <rect x="2" y="2" width="68" height="52" rx="4" fill="none" stroke="#333" strokeWidth="3.500" />
        <path d="M3 14L36 36L69 14" fill="none" stroke="#333" strokeWidth="3.500" />
      </svg>
      <svg className="ml-[112px] mt-[62px] shrink-0" width="38" height="44" viewBox="0 0 38 44">
        <circle cx="19" cy="19" r="16.500" fill="none" stroke="#333" strokeWidth="3.500" />
      </svg>
      <svg className="ml-[116px] mt-[62px] shrink-0" width="68" height="68" viewBox="0 0 68 68">
        <circle cx="34" cy="34" r="32" fill="none" stroke="#333" strokeWidth="3.500" />
      </svg>
    </div>
  );
}

function BottomBar() {
  return (
    <div className="h-[276px] bg-[#242424] text-[47px] text-[#d2d0d0]">
      <div className="flex h-[232px]">
        <div className="ml-[65px] flex w-[202px] shrink-0 flex-col items-center">
          <svg className="mt-[15px]" width="36" height="20">
            <path d="M18 0L36 20H0Z" fill="#aaa" />
          </svg>
          <Fit className="mt-[27px] w-[94px] text-[#bdbdbd]">教育</Fit>
          <Fit className="mt-[33px] w-[162px] text-[51px] text-[#7df55c]">-0.80%</Fit>
        </div>
        <div className="ml-[104px] flex w-[200px] shrink-0 flex-col items-center pt-[29px]">
          <svg width="66" height="75" viewBox="0 0 66 75" fill="none" stroke="currentColor" strokeWidth="3.500">
            <path d="M10 2H56Q64 2 64 10V58L50 73H10Q2 73 2 65V10Q2 2 10 2Z" />
            <path d="M10 21H56M10 30H56M10 40H56M10 50H42" />
          </svg>
          <Fit className="mt-[17px] w-[94px]">下单</Fit>
        </div>
        <div className="ml-[77px] flex w-[200px] shrink-0 flex-col items-center pt-[34px]">
          <svg width="78" height="70" viewBox="0 0 78 70" fill="none" stroke="currentColor" strokeWidth="3.500">
            <rect x="2" y="10" width="74" height="54" rx="7" />
            <path d="M24 2H54M38.500 24V50M25 37H52M13 67H26M51 67H64" />
          </svg>
          <Fit className="mt-[17px] w-[94px]">诊股</Fit>
        </div>
        <div className="ml-[77px] flex w-[200px] shrink-0 flex-col items-center pt-[33px]">
          <svg width="66" height="66" viewBox="0 0 66 66" fill="none" stroke="currentColor" strokeWidth="3.500">
            <path d="M2 2H64V64H2ZM16 33H50" />
          </svg>
          <Fit className="mt-[22px] w-[142px]">删自选</Fit>
        </div>
        <div className="relative ml-[78px] flex w-[200px] shrink-0 flex-col items-center pt-[32px]">
          <svg width="70" height="70" viewBox="0 0 70 70" fill="none" stroke="currentColor" strokeWidth="3.500">
            <circle cx="35" cy="35" r="33" />
            <path d="M19 25H51M19 44H51" />
          </svg>
          <span className="absolute left-[144px] top-[31px] size-[25px] rounded-full bg-[#d4433b]" />
          <Fit className="mt-[19px] w-[94px]">功能</Fit>
        </div>
      </div>
      <div className="mx-auto h-[16px] w-[576px] rounded-[8px] bg-[#666]" />
    </div>
  );
}

export default function App() {
  return (
    <div className="h-[3168px] w-[1440px] overflow-hidden bg-white font-[Roboto,'Noto_Sans_CJK_SC',sans-serif]">
      <header className="h-[344px] bg-[#dd4440]">
        <StatusBar />
        <TitleBar />
      </header>
      <Quote />
      <News />
      <div className="h-[16px] bg-[#f4f4f4]" />
      <PeriodTabs />
      <Legend />
      <div className="flex h-[1616px]">
        <ChartColumn />
        <OrderBook />
      </div>
      <div className="h-[16px] bg-[#f4f4f4]" />
      <SectionTabs />
      <Community />
      <BottomBar />
    </div>
  );
}
